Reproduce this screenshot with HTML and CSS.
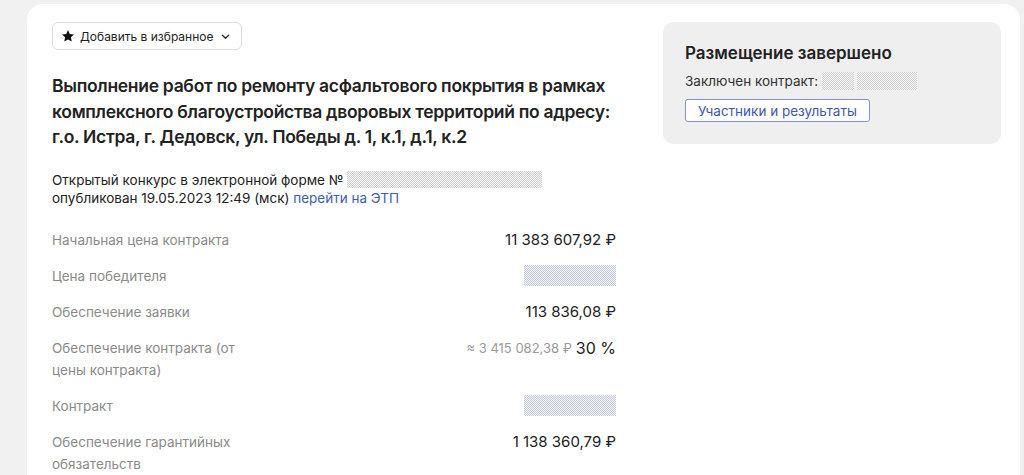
FILE: index.html
```html
<!DOCTYPE html>
<html lang="ru">
<head>
<meta charset="utf-8">
<link rel="stylesheet" href="styles.css">
</head>
<body>
<div class="card">
  <div class="main">
    <button class="fav">
      <svg class="star" viewBox="0 0 24 24" width="14" height="14"><path d="M12 1.8l3.1 6.6 7.2.9-5.3 5 1.4 7.1L12 17.9l-6.4 3.5L7 14.3l-5.3-5 7.2-.9z" fill="#111"/></svg>
      <span>Добавить в избранное</span>
      <svg class="chev" viewBox="0 0 12 12" width="11" height="11"><path d="M2.5 4.5L6 8l3.5-3.5" fill="none" stroke="#222" stroke-width="1.5" stroke-linecap="round" stroke-linejoin="round"/></svg>
    </button>
    <h1 class="title">Выполнение работ по ремонту асфальтового покрытия в рамках комплексного благоустройства дворовых территорий по адресу: г.о. Истра, г. Дедовск, ул. Победы д. 1, к.1, д.1, к.2</h1>
    <div class="sub">
      <div>Открытый конкурс в электронной форме № <span class="mask mask-num"></span></div>
      <div>опубликован 19.05.2023 12:49 (мск) <a class="link" href="#">перейти на ЭТП</a></div>
    </div>
    <div class="rows">
      <div class="row"><div class="label">Начальная цена контракта</div><div class="value">11 383 607,92 ₽</div></div>
      <div class="row"><div class="label">Цена победителя</div><div class="value"><span class="mask mask-blue"></span></div></div>
      <div class="row"><div class="label">Обеспечение заявки</div><div class="value">113 836,08 ₽</div></div>
      <div class="row"><div class="label">Обеспечение контракта (от цены контракта)</div><div class="value"><span class="approx">≈ 3 415 082,38 ₽</span> <span class="pct">30 %</span></div></div>
      <div class="row"><div class="label">Контракт</div><div class="value"><span class="mask mask-blue"></span></div></div>
      <div class="row"><div class="label">Обеспечение гарантийных обязательств</div><div class="value">1 138 360,79 ₽</div></div>
    </div>
  </div>
  <aside class="side">
    <div class="status">
      <div class="status-title">Размещение завершено</div>
      <div class="status-line">Заключен контракт: <span class="mask mask-a"></span><span class="mask mask-b"></span></div>
      <button class="results">Участники и результаты</button>
    </div>
  </aside>
</div>
</body>
</html>
```
FILE: styles.css
```css
html, body {
  margin: 0;
  padding: 0;
  background: #f1f1f1;
  font-family: Inter, "Noto Sans", "Liberation Sans", sans-serif;
  color: #222;
  overflow: hidden;
}
.card {
  margin: 4px 0 0 27px;
  width: 993px;
  height: 520px;
  box-sizing: border-box;
  background: #fff;
  border-radius: 16px 16px 0 0;
  padding: 18px 0 0 25px;
  display: flex;
  gap: 47px;
}
.main {
  width: 564px;
  flex: none;
}
.fav {
  display: inline-flex;
  align-items: center;
  gap: 5px;
  height: 28px;
  box-sizing: border-box;
  padding: 0 10px 0 8px;
  border: 1px solid #dcdcdc;
  border-radius: 6px;
  background: #fff;
  font-family: inherit;
  font-size: 12px;
  color: #222;
}
.chev { margin-left: 2px; }
.title {
  margin: 23px 0 0;
  font-size: 17.5px;
  line-height: 25.5px;
  font-weight: 600;
  color: #222;
  letter-spacing: -0.3px;
}
.sub {
  margin-top: 21px;
  font-size: 13.5px;
  line-height: 18px;
  color: #222;
}
.link {
  color: #3d5cb8;
  text-decoration: none;
}
.mask {
  display: inline-block;
  vertical-align: middle;
  background-color: #f6f6f6;
  background-image: conic-gradient(#cfcfcf 25%, transparent 0 50%, #cfcfcf 0 75%, transparent 0);
  background-size: 2px 2px;
}
.mask-num {
  width: 195px;
  height: 17px;
  margin-top: -3px;
}
.mask-blue {
  width: 92px;
  height: 21px;
  background-color: #f5f6fa;
  background-image: conic-gradient(#c4c8dc 25%, transparent 0 50%, #c4c8dc 0 75%, transparent 0);
}
.rows {
  margin-top: 22px;
  display: flex;
  flex-direction: column;
  gap: 14px;
}
.row {
  display: flex;
  justify-content: space-between;
  align-items: flex-start;
  width: 564px;
}
.label {
  width: 195px;
  font-size: 13.5px;
  line-height: 22px;
  color: #8a8a8a;
}
.value {
  font-size: 15px;
  line-height: 22px;
  color: #222;
  text-align: right;
  height: 22px;
  display: flex;
  align-items: center;
  gap: 4px;
}
.approx {
  font-size: 13px;
  color: #9a9a9a;
}
.pct {
  font-size: 16px;
}
.side {
  width: 338px;
  flex: none;
}
.status {
  background: #efefef;
  border-radius: 10px;
  padding: 20px 22px 22px;
}
.status-title {
  font-size: 17px;
  line-height: 22px;
  font-weight: 600;
  color: #222;
}
.status-line {
  margin-top: 8px;
  font-size: 13.5px;
  line-height: 18px;
  color: #333;
}
.mask-a {
  width: 32px;
  height: 18px;
  margin-top: -3px;
}
.mask-b {
  width: 60px;
  height: 18px;
  margin-top: -3px;
  margin-left: 3px;
}
.results {
  margin-top: 9px;
  height: 23px;
  box-sizing: border-box;
  padding: 0 12px;
  border: 1px solid #8190d6;
  border-radius: 3px;
  background: #fff;
  font-family: inherit;
  font-size: 13.5px;
  color: #3e55b4;
}
```
